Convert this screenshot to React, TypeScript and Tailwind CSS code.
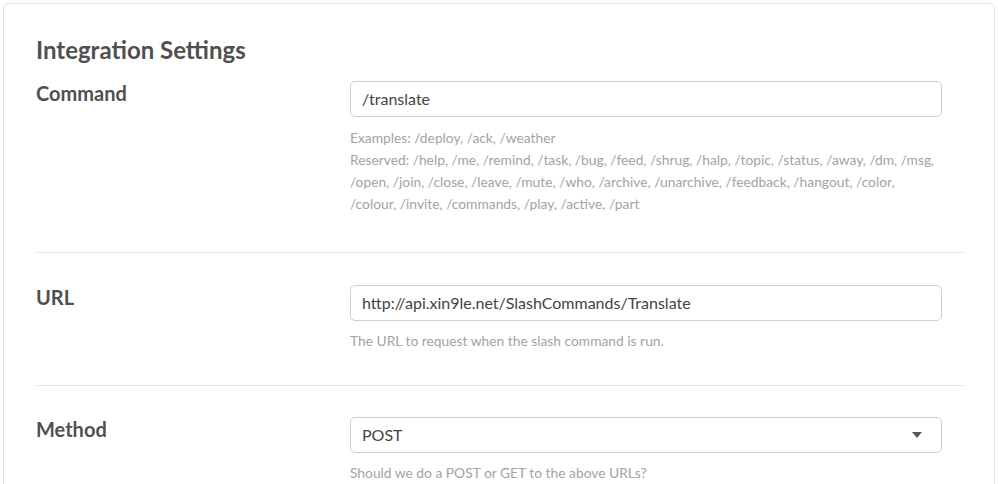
import React from 'react';

const reserved =
    '/help, /me, /remind, /task, /bug, /feed, /shrug, /halp, /topic, /status, /away, /dm, /msg, /open, /join, /close, /leave, /mute, /who, /archive, /unarchive, /feedback, /hangout, /color, /colour, /invite, /commands, /play, /active, /part';

const Caret = () => (
    <svg width="10" height="6" viewBox="0 0 10 6" className="text-[#555]">
        <path d="M0 0h10L5 6z" fill="currentColor" />
    </svg>
);

const App: React.FC = () => {
    return (
        <div className="min-h-screen bg-white p-[3px] font-['Lato','Liberation_Sans',sans-serif]">
            <div className="rounded-[5px] border border-[#e3e3e3] bg-white pl-8 pr-[30px] pt-8">
                <h2 className="text-[24px] leading-[28px] font-bold text-[#505050]">Integration Settings</h2>

                {/* command */}
                <div className="flex border-b border-[#e8e8e8] pt-[17px] pb-[37px]">
                    <label className="w-[314px] shrink-0 text-[20px] leading-6 font-bold text-[#505050]">Command</label>
                    <div className="w-[592px]">
                        <div className="flex h-9 items-center rounded-[5px] border border-[#cfcfcf] px-[11px] text-[16px] text-[#444]">
                            /translate
                        </div>
                        <div className="mt-[10px] text-[13.8px] leading-[22px] text-[#a3a3a3]">
                            <p>Examples: /deploy, /ack, /weather</p>
                            <p>Reserved: {reserved}</p>
                        </div>
                    </div>
                </div>

                {/* url */}
                <div className="flex border-b border-[#e8e8e8] pt-[32px] pb-[33px]">
                    <label className="w-[314px] shrink-0 text-[20px] leading-6 font-bold text-[#505050]">URL</label>
                    <div className="w-[592px]">
                        <div className="flex h-9 items-center rounded-[5px] border border-[#cfcfcf] px-[11px] text-[16px] text-[#444]">
                            http://api.xin9le.net/SlashCommands/Translate
                        </div>
                        <p className="mt-[9px] text-[13.8px] leading-[22px] text-[#a3a3a3]">
                            The URL to request when the slash command is run.
                        </p>
                    </div>
                </div>

                {/* method */}
                <div className="flex pt-[31px] pb-8">
                    <label className="w-[314px] shrink-0 text-[20px] leading-6 font-bold text-[#505050]">Method</label>
                    <div className="w-[592px]">
                        <div className="flex h-9 items-center justify-between rounded-[5px] border border-[#cfcfcf] pl-[11px] pr-[19px] text-[16px] text-[#444]">
                            <span>POST</span>
                            <Caret />
                        </div>
                        <p className="mt-[9px] text-[13.8px] leading-[22px] text-[#a3a3a3]">
                            Should we do a POST or GET to the above URLs?
                        </p>
                    </div>
                </div>
            </div>
        </div>
    );
};

export default App;
